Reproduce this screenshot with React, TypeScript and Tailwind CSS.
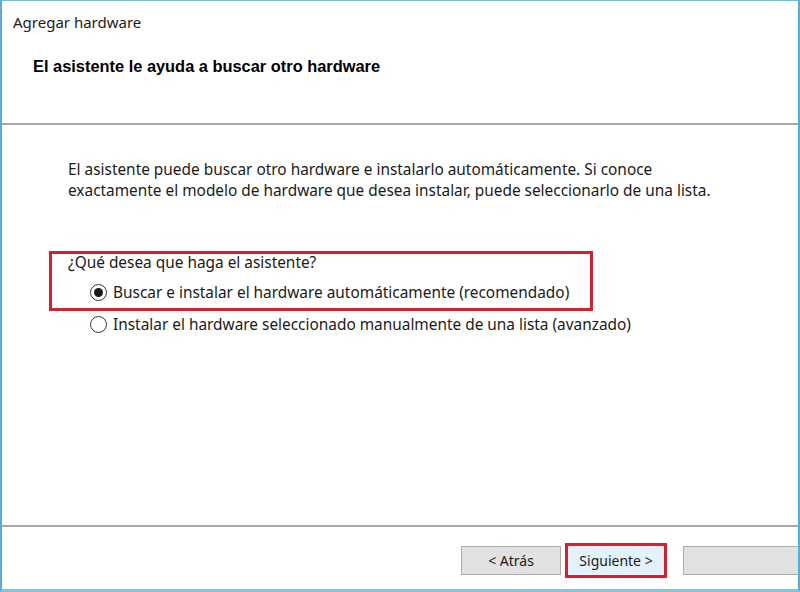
import React from "react";

const ui = { fontFamily: '"Noto Sans", "Open Sans", sans-serif' };
const ms = { fontFamily: '"Liberation Sans", Arial, sans-serif' };

function Radio({ checked }: { checked?: boolean }) {
  return (
    <span className="flex h-[17px] w-[17px] shrink-0 items-center justify-center rounded-full border border-[#333] bg-white">
      {checked && <span className="h-[9px] w-[9px] rounded-full bg-[#1a1a1a]" />}
    </span>
  );
}

export default function App() {
  return (
    <div className="flex h-[592px] w-[800px] flex-col overflow-hidden border-x-[2px] border-t-[1px] border-b-[3px] border-x-[#5aaed0] border-t-[#79bcd8] border-b-[#7cc6e0] bg-white text-[#1a1a1a]">
      <div className="h-[122px] shrink-0">
        <div className="pl-[11px] pt-[10px] text-[15px] leading-[22px]" style={ui}>
          Agregar hardware
        </div>
        <div className="pl-[31px] pt-[23px] text-[16.4px] font-bold leading-[20px] text-black" style={ms}>
          El asistente le ayuda a buscar otro hardware
        </div>
      </div>
      <div className="h-[2px] shrink-0 bg-[#a8a8a8]" />
      <div className="flex-1 text-[15.4px] leading-[21px]" style={ui}>
        <div className="pl-[66px] pt-[34px]">
          <p>El asistente puede buscar otro hardware e instalarlo automáticamente. Si conoce</p>
          <p>exactamente el modelo de hardware que desea instalar, puede seleccionarlo de una lista.</p>
        </div>
        <div className="ml-[47px] mt-[50px] h-[60px] w-[544px] border-[3px] border-[#d3212f] pl-[16px]">
          <div className="-mt-[2px]">¿Qué desea que haga el asistente?</div>
          <div className="mt-[9px] flex items-center gap-[6px] pl-[22px]">
            <Radio checked />
            <span>Buscar e instalar el hardware automáticamente (recomendado)</span>
          </div>
        </div>
        <div className="ml-[88px] mt-[3px] flex items-center gap-[6px]">
          <Radio />
          <span>Instalar el hardware seleccionado manualmente de una lista (avanzado)</span>
        </div>
      </div>
      <div className="h-[2px] shrink-0 bg-[#a8a8a8]" />
      <div className="flex h-[62px] shrink-0 items-start gap-[4px] pl-[459px] pt-[16px] text-[14px]" style={ui}>
        <div className="mt-[3px] flex h-[29px] w-[100px] items-center justify-center border border-[#adadad] bg-[#e1e1e1]">
          &lt; Atrás
        </div>
        <div className="flex h-[35px] w-[102px] items-center justify-center border-[3px] border-[#d3212f] bg-[#e5f1fb]">
          Siguiente &gt;
        </div>
        <div className="ml-[12px] mt-[3px] h-[29px] flex-1 border border-r-0 border-[#adadad] bg-[#e1e1e1]" />
      </div>
    </div>
  );
}
